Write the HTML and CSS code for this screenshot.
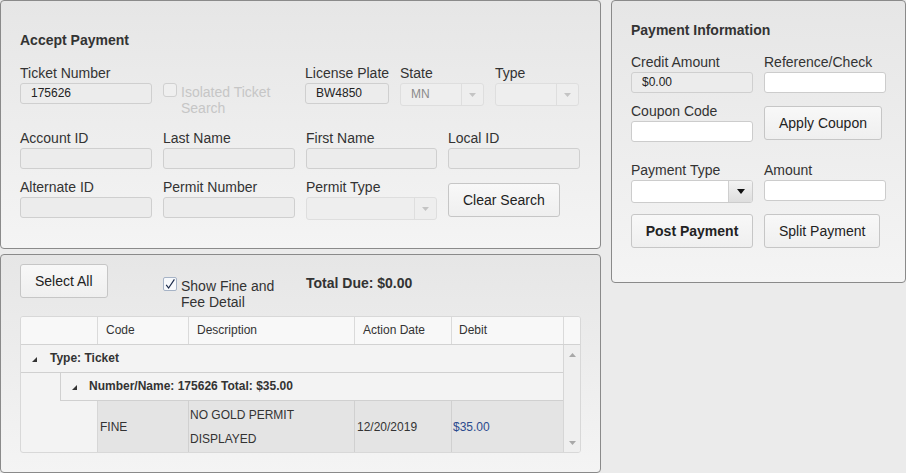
FILE: index.html
```html
<!DOCTYPE html>
<html>
<head>
<meta charset="utf-8">
<link rel="stylesheet" href="styles.css">
</head>
<body>
<div class="page">
  <div class="left">
    <section class="panel panel-search">
      <h2 class="title">Accept Payment</h2>
      <div class="row1">
        <div class="field w132">
          <label class="lbl">Ticket Number</label>
          <div class="inp dis">175626</div>
        </div>
        <div class="iso">
          <span class="cb cb-dis"></span>
          <span class="iso-text">Isolated Ticket Search</span>
        </div>
        <div class="field w84">
          <label class="lbl">License Plate</label>
          <div class="inp dis">BW4850</div>
        </div>
        <div class="field w84">
          <label class="lbl">State</label>
          <div class="sel dis"><span class="sel-val">MN</span><span class="sel-arrow"><svg width="7" height="4" viewBox="0 0 7 4"><polygon points="0,0 7,0 3.5,4" fill="#c4c4c4"/></svg></span></div>
        </div>
        <div class="field w84">
          <label class="lbl">Type</label>
          <div class="sel dis"><span class="sel-val"></span><span class="sel-arrow"><svg width="7" height="4" viewBox="0 0 7 4"><polygon points="0,0 7,0 3.5,4" fill="#c4c4c4"/></svg></span></div>
        </div>
      </div>
      <div class="grid4">
        <div class="field"><label class="lbl">Account ID</label><div class="inp dis"></div></div>
        <div class="field"><label class="lbl">Last Name</label><div class="inp dis"></div></div>
        <div class="field"><label class="lbl">First Name</label><div class="inp dis"></div></div>
        <div class="field"><label class="lbl">Local ID</label><div class="inp dis"></div></div>
        <div class="field"><label class="lbl">Alternate ID</label><div class="inp dis"></div></div>
        <div class="field"><label class="lbl">Permit Number</label><div class="inp dis"></div></div>
        <div class="field">
          <label class="lbl">Permit Type</label>
          <div class="sel dis"><span class="sel-val"></span><span class="sel-arrow"><svg width="7" height="4" viewBox="0 0 7 4"><polygon points="0,0 7,0 3.5,4" fill="#c4c4c4"/></svg></span></div>
        </div>
        <div class="field"><button class="btn btn-clear">Clear Search</button></div>
      </div>
    </section>

    <section class="panel panel-charges">
      <div class="toolbar">
        <div><button class="btn">Select All</button></div>
        <div class="chk">
          <span class="cb cb-on"><svg width="12" height="12" viewBox="0 0 12 12"><polyline points="2.2,6.8 4.6,10 10.4,1.4" fill="none" stroke="#1d2c4c" stroke-width="1.2"/></svg></span>
          <span class="chk-text">Show Fine and Fee Detail</span>
        </div>
        <div class="total">Total Due: $0.00</div>
      </div>
      <div class="dg">
        <div class="dg-head">
          <div class="h h0"></div>
          <div class="h h1">Code</div>
          <div class="h h2">Description</div>
          <div class="h h3">Action Date</div>
          <div class="h h4">Debit</div>
          <div class="h h5"></div>
        </div>
        <div class="dg-body">
          <div class="dg-rows">
            <div class="grp"><svg class="tri" width="5" height="5" viewBox="0 0 5 5"><polygon points="5,0 5,5 0,5" fill="#333"/></svg>Type: Ticket</div>
            <div class="grp sub"><svg class="tri" width="5" height="5" viewBox="0 0 5 5"><polygon points="5,0 5,5 0,5" fill="#333"/></svg>Number/Name: 175626 Total: $35.00</div>
            <div class="data">
              <div class="blank"></div>
              <div class="cell c1">FINE</div>
              <div class="cell c2">NO GOLD PERMIT DISPLAYED</div>
              <div class="cell c3">12/20/2019</div>
              <div class="cell c4 money">$35.00</div>
            </div>
          </div>
          <div class="vs">
            <svg width="7" height="4" viewBox="0 0 7 4"><polygon points="0,4 7,4 3.5,0" fill="#a8a8a8"/></svg>
            <svg width="7" height="4" viewBox="0 0 7 4"><polygon points="0,0 7,0 3.5,4" fill="#a8a8a8"/></svg>
          </div>
        </div>
      </div>
    </section>
  </div>

  <section class="panel panel-payment">
    <h2 class="title">Payment Information</h2>
    <div class="prow prow-a">
      <div class="field"><label class="lbl">Credit Amount</label><div class="inp dis">$0.00</div></div>
      <div class="field"><label class="lbl">Reference/Check</label><div class="inp"></div></div>
    </div>
    <div class="prow prow-b">
      <div class="field"><label class="lbl">Coupon Code</label><div class="inp"></div></div>
      <div class="field"><button class="btn btn-coupon">Apply Coupon</button></div>
    </div>
    <div class="prow prow-c">
      <div class="field">
        <label class="lbl">Payment Type</label>
        <div class="sel sel-live"><span class="sel-val"></span><span class="sel-arrow"><svg width="8" height="5" viewBox="0 0 8 5"><polygon points="0,0 8,0 4,5" fill="#111"/></svg></span></div>
      </div>
      <div class="field"><label class="lbl">Amount</label><div class="inp"></div></div>
    </div>
    <div class="prow prow-d">
      <div><button class="btn btn-post">Post Payment</button></div>
      <div><button class="btn">Split Payment</button></div>
    </div>
  </section>
</div>
</body>
</html>
```

FILE: styles.css
```css
* { box-sizing: border-box; }
html, body { margin: 0; padding: 0; }
body {
  background: #ebebeb;
  font-family: "Liberation Sans", Arial, sans-serif;
  color: #333;
  width: 906px;
  height: 473px;
  overflow: hidden;
}
.page {
  display: grid;
  grid-template-columns: 601px 295px;
  column-gap: 10px;
  align-items: start;
}
.left { display: flex; flex-direction: column; gap: 5px; }

.panel {
  border: 1px solid #8a8a8a;
  border-radius: 4px;
  background: linear-gradient(#e6e6e6, #f4f4f4);
}
.panel-search { height: 249px; padding: 31px 19px 0; }
.panel-charges { height: 219px; padding: 9px 19px 0; }
.panel-payment { height: 283px; padding: 21px 19px 0; }

.title {
  margin: 0;
  font-size: 14px;
  line-height: 16px;
  font-weight: bold;
  color: #333;
  white-space: nowrap;
}

.lbl {
  display: block;
  font-size: 14px;
  line-height: 16px;
  margin-bottom: 2px;
  color: #333;
  white-space: nowrap;
}
.inp {
  height: 21px;
  border: 1px solid #cccccc;
  border-radius: 3px;
  background: #fff;
  font-size: 12px;
  line-height: 19px;
  padding: 0 10px;
  color: #222;
}
.inp.dis { background: #ececec; border-color: #cfcfcf; }

.sel {
  height: 23px;
  display: flex;
  border: 1px solid #dedede;
  border-radius: 3px;
  background: #eeeeee;
}
.sel-val {
  flex: 1;
  padding-left: 10px;
  font-size: 12px;
  line-height: 21px;
  color: #8a8a8a;
}
.sel-arrow {
  width: 22px;
  border-left: 1px solid #dedede;
  display: flex;
  align-items: center;
  justify-content: center;
}
.sel-live { background: #fff; border-color: #cccccc; }
.sel-live .sel-arrow {
  width: 24px;
  border-left-color: #cfcfcf;
  background: linear-gradient(#f3f3f3, #dedede);
  border-radius: 0 2px 2px 0;
}

.btn {
  height: 34px;
  padding: 0 14px;
  border: 1px solid #c6c6c6;
  border-radius: 3px;
  background: linear-gradient(#f8f8f8, #efefef);
  font-family: "Liberation Sans", Arial, sans-serif;
  font-size: 14px;
  line-height: 32px;
  color: #222;
  white-space: nowrap;
  cursor: pointer;
}
.btn-post { width: 122px; padding: 0; font-weight: bold; }
.btn-clear { margin-top: 4px; }
.btn-coupon { margin-top: 3px; }

/* search panel */
.row1 { display: flex; gap: 11px; margin-top: 17px; height: 51px; }
.w132 { width: 132px; }
.w84 { width: 84px; }
.iso { width: 131px; display: flex; gap: 4px; padding-top: 18px; align-items: flex-start; }
.cb {
  flex: none;
  width: 14px;
  height: 14px;
  border-radius: 3px;
  display: flex;
  align-items: center;
  justify-content: center;
}
.cb-dis { border: 1px solid #d0d0d0; background: #efefef; }
.iso-text { font-size: 14px; line-height: 16px; color: #c6c6c6; margin-top: 1px; }

.grid4 {
  display: grid;
  grid-template-columns: 132px 132px 131px 132px;
  column-gap: 11px;
  row-gap: 10px;
  margin-top: 14px;
}

/* charges panel */
.toolbar {
  display: grid;
  grid-template-columns: 132px 132px auto;
  column-gap: 11px;
  height: 52px;
  align-items: start;
}
.chk { display: flex; gap: 4px; margin-top: 13px; align-items: flex-start; }
.cb-on { border: 1px solid #a6b3c6; background: #f7f9fc; border-radius: 2px; }
.chk-text { font-size: 14px; line-height: 16px; margin-top: 1px; color: #333; }
.total { margin-top: 11px; font-size: 14px; line-height: 16px; font-weight: bold; color: #333; }

.dg {
  width: 561px;
  border: 1px solid #d8d8d8;
  border-radius: 3px;
  background: #f3f3f3;
  overflow: hidden;
  font-size: 12px;
  color: #333;
}
.dg-head {
  display: flex;
  height: 28px;
  border-bottom: 1px solid #d2d2d2;
  background: #f8f8f8;
}
.h { border-right: 1px solid #dadada; padding-left: 8px; line-height: 27px; }
.h0 { width: 77px; }
.h1 { width: 91px; }
.h2 { width: 166px; }
.h3 { width: 97px; }
.h4 { width: 112px; padding-left: 7px; }
.h5 { width: 16px; border-right: none; }

.dg-body { display: flex; height: 107px; }
.dg-rows { width: 542px; }
.grp {
  height: 28px;
  border-bottom: 1px solid #d0d0d0;
  display: flex;
  align-items: center;
  padding-left: 11px;
  font-weight: bold;
  line-height: 27px;
}
.grp .tri { margin-right: 13px; margin-top: 2px; }
.sub { margin-left: 39px; border-left: 1px solid #d0d0d0; }
.sub .tri { margin-right: 12px; }

.data { display: flex; height: 51px; }
.blank { width: 77px; border-right: 1px solid #d6d6d6; }
.cell {
  background: #e4e4e4;
  border-right: 1px solid #d0d0d0;
  display: flex;
  align-items: center;
  padding-left: 2px;
}
.c1 { width: 91px; }
.c2 { width: 166px; padding-left: 1px; line-height: 24px; }
.c3 { width: 97px; }
.c4 { width: 111px; padding-left: 1px; border-right: none; }
.money { color: #2a4a8e; }

.vs {
  width: 17px;
  border-left: 1px solid #d6d6d6;
  background: #efefef;
  display: flex;
  flex-direction: column;
  align-items: center;
  justify-content: space-between;
  padding: 8px 0 7px;
}

/* payment panel */
.prow {
  display: grid;
  grid-template-columns: 122px 122px;
  column-gap: 11px;
  align-items: start;
}
.prow-a { margin-top: 16px; }
.prow-b { margin-top: 10px; }
.prow-c { margin-top: 20px; }
.prow-d { margin-top: 11px; }
```
